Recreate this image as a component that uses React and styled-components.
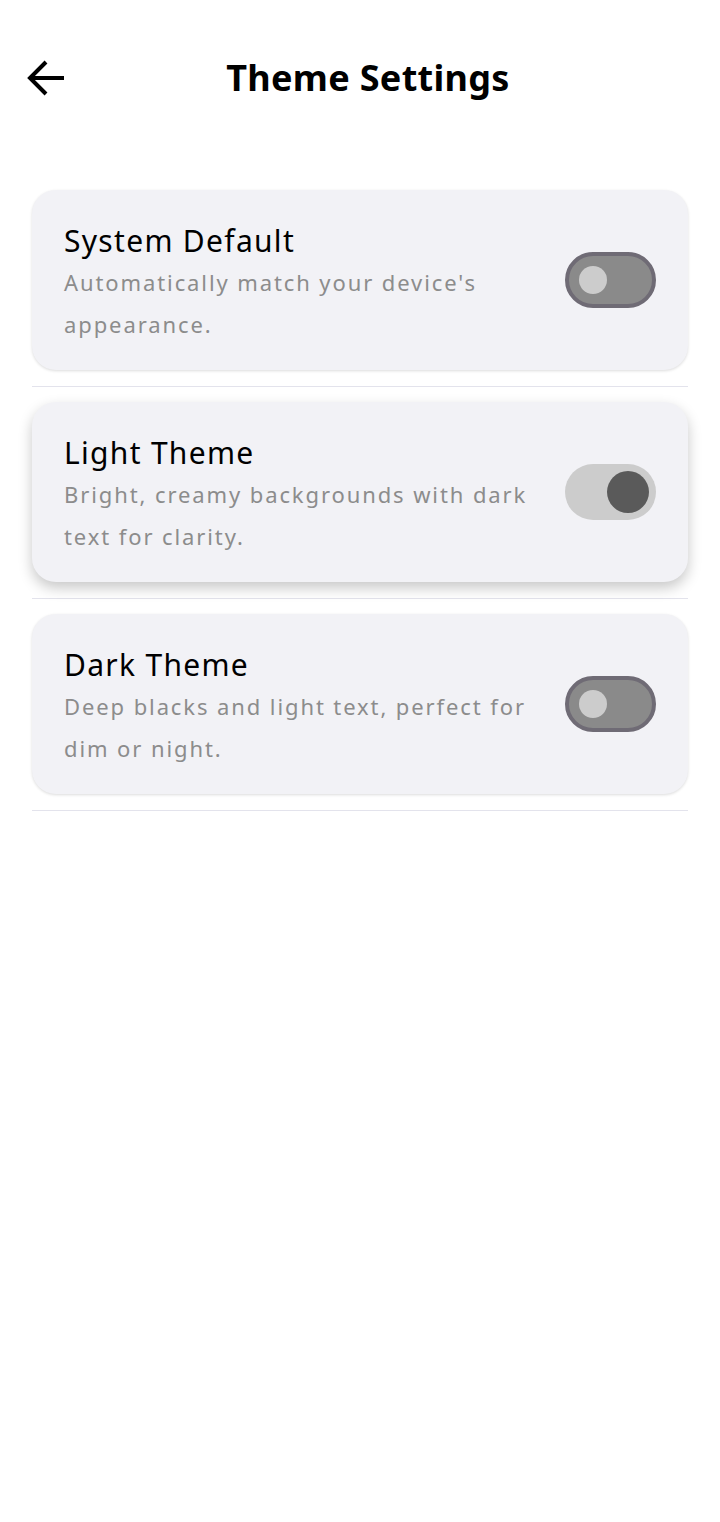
import React, { useState } from 'react';
import styled, { createGlobalStyle } from 'styled-components';

// * Global reset ////////////////
const GlobalStyle = createGlobalStyle`
	body {
		margin: 0;
		background: #ffffff;
		font-family: 'Noto Sans', 'Open Sans', sans-serif;
	}
`;
/////////////////////////////////////////////////////////////////////////

const Page = styled.main`
	width: 720px;
	min-height: 1522px;
	background: #ffffff;
`;

// * Header bar ////////////////
const Header = styled.header`
	height: 156px;
	padding-top: 56px;
	box-sizing: border-box;
	display: grid;
	grid-template-columns: 100px 1fr 84px;
	align-items: start;
`;

const BackButton = styled.button`
	background: none;
	border: none;
	padding: 0 0 0 27px;
	height: 44px;
	display: flex;
	align-items: center;
	cursor: pointer;
	color: #000;
`;

const Title = styled.h1`
	margin: 0;
	text-align: center;
	font-size: 36px;
	font-weight: 700;
	line-height: 44px;
	letter-spacing: 0.3px;
	color: #000;
`;
/////////////////////////////////////////////////////////////////////////

const List = styled.section`
	padding: 34px 32px 0;
	display: flex;
	flex-direction: column;
`;

const Item = styled.div`
	padding-bottom: 16px;
	margin-bottom: 15px;
	border-bottom: 1px solid #e3e3ec;
`;

// * Option card ////////////////
const Card = styled.div`
	height: 180px;
	box-sizing: border-box;
	background: #f2f2f6;
	border-radius: 24px;
	padding: 0 32px;
	display: flex;
	align-items: center;
	gap: 24px;
	box-shadow: ${(props) =>
		props.active
			? '0 6px 14px rgba(0, 0, 0, 0.22)'
			: '0 1px 3px rgba(0, 0, 0, 0.14)'};
`;

const Text = styled.div`
	flex: 1;
	display: flex;
	flex-direction: column;
	margin-top: 6px;
`;

const CardTitle = styled.div`
	font-size: 30px;
	line-height: 40px;
	color: #000;
	letter-spacing: 1.3px;
`;

const CardDesc = styled.div`
	font-size: 22px;
	line-height: 42px;
	color: #8c8c8c;
	letter-spacing: 1.9px;
`;
/////////////////////////////////////////////////////////////////////////

// * Toggle switch ////////////////
const Track = styled.button`
	flex: none;
	width: 91px;
	height: 56px;
	box-sizing: border-box;
	border-radius: 28px;
	cursor: pointer;
	display: flex;
	align-items: center;
	background: ${(props) => (props.on ? '#cccccc' : '#8a8a8a')};
	border: ${(props) => (props.on ? 'none' : '4px solid #6f6b75')};
	justify-content: ${(props) => (props.on ? 'flex-end' : 'flex-start')};
	padding: ${(props) => (props.on ? '0 7px' : '0 10px')};
`;

const Knob = styled.span`
	display: block;
	border-radius: 50%;
	width: ${(props) => (props.on ? '42px' : '28px')};
	height: ${(props) => (props.on ? '42px' : '28px')};
	background: ${(props) => (props.on ? '#5a5a5a' : '#cccccc')};
`;
/////////////////////////////////////////////////////////////////////////

const options = [
	{
		id: 'system',
		title: 'System Default',
		desc: "Automatically match your device's appearance.",
	},
	{
		id: 'light',
		title: 'Light Theme',
		desc: 'Bright, creamy backgrounds with dark text for clarity.',
	},
	{
		id: 'dark',
		title: 'Dark Theme',
		desc: 'Deep blacks and light text, perfect for dim or night.',
	},
];

export default function App() {
	const [selected, setSelected] = useState('light');

	return (
		<Page>
			<GlobalStyle />
			<Header>
				<BackButton aria-label="Back">
					<svg width="40" height="40" viewBox="0 0 40 40" fill="none">
						<path
							d="M37 20H5M19 4L3 20l16 16"
							stroke="#000"
							strokeWidth="4"
							strokeLinecap="butt"
							strokeLinejoin="miter"
						/>
					</svg>
				</BackButton>
				<Title>Theme Settings</Title>
				<div />
			</Header>
			<List>
				{options.map((o) => (
					<Item key={o.id}>
						<Card active={selected === o.id}>
							<Text>
								<CardTitle>{o.title}</CardTitle>
								<CardDesc>{o.desc}</CardDesc>
							</Text>
							<Track on={selected === o.id} onClick={() => setSelected(o.id)}>
								<Knob on={selected === o.id} />
							</Track>
						</Card>
					</Item>
				))}
			</List>
		</Page>
	);
}
